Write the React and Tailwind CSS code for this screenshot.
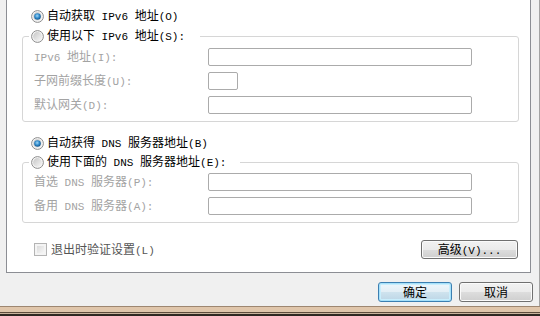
import React from "react";

const CJK = /([\u3000-\u9fff\uff00-\uffef]+)/;

// split text so Latin runs get a half-width mono face (like SimSun)
function T({ s }) {
  return s
    .split(CJK)
    .filter(Boolean)
    .map((p, i) =>
      CJK.test(p) ? (
        <span key={i}>{p}</span>
      ) : (
        <span key={i} className="font-['Liberation_Mono',monospace] text-[11px] whitespace-pre">
          {p}
        </span>
      )
    );
}

function Radio({ checked }) {
  return (
    <svg width="13" height="13" viewBox="0 0 13 13" className="shrink-0">
      <defs>
        <linearGradient id="rg" x1="0" y1="0" x2="1" y2="1">
          <stop offset="0" stopColor="#c6c6c6" />
          <stop offset="1" stopColor="#f7f7f7" />
        </linearGradient>
        <radialGradient id="rb" cx="0.45" cy="0.4" r="0.65">
          <stop offset="0" stopColor="#9fd8f8" />
          <stop offset="0.55" stopColor="#2c86c8" />
          <stop offset="1" stopColor="#0e4a7a" />
        </radialGradient>
      </defs>
      <circle cx="6.5" cy="6.5" r="5.9" fill="#f5f5f5" stroke="#8d8d8d" strokeWidth="1" />
      <circle cx="6.5" cy="6.5" r="4.4" fill="url(#rg)" />
      {checked && <circle cx="6.5" cy="6.5" r="3.3" fill="url(#rb)" />}
    </svg>
  );
}

function Field({ w = "w-[264px]" }) {
  return (
    <input
      disabled
      className={`h-[18px] ${w} border border-[#ababab] rounded-[2px] bg-white`}
    />
  );
}

function Row({ label, short }) {
  return (
    <div className="flex items-center h-[18px] text-[#a3a3a3]">
      <div className="w-[174px] leading-none">
        <T s={label} />
      </div>
      <Field w={short ? "w-[30px]" : "w-[264px]"} />
    </div>
  );
}

function Btn({ children, primary, w = "w-[74px]", h = "h-[20px]" }) {
  return (
    <button
      className={`${w} ${h} rounded-[3px] border text-[12px] leading-none text-black ${
        primary
          ? "border-[#3c7fb1] shadow-[inset_0_0_0_1px_#a6e1fb,inset_0_0_0_2px_#c9eefc] bg-[linear-gradient(#eef7fc,#e2eef5_50%,#cfe3ee_50%,#bcd6e6)]"
          : "border-[#707070] shadow-[inset_0_0_0_1px_#fbfbfb] bg-[linear-gradient(#f2f2f2,#ebebeb_50%,#dddddd_50%,#cfcfcf)]"
      }`}
    >
      {children}
    </button>
  );
}

export default function App() {
  return (
    <div className="w-[540px] h-[316px] overflow-hidden bg-[#f0f0f0] font-['Noto_Sans_CJK_SC',sans-serif] text-[12px] text-black">
      <div className="h-[306px] border-r border-[#a3a3a3] pl-[6px] flex flex-col">
        {/* tab page */}
        <div className="w-[525px] h-[273px] bg-white border-l border-r border-b border-[#8c8e94] pl-[15px]">
          <div className="flex items-center gap-[3px] h-[20px] mt-[6px] pl-[9px] leading-none">
            <Radio checked />
            <span>
              <T s="自动获取 IPv6 地址(O)" />
            </span>
          </div>

          <fieldset className="w-[497px] m-0 p-0 border border-[#d6d6d6] rounded-[3px]">
            <legend className="ml-[6px] p-0">
              <div className="w-[171px] h-[20px] flex items-center gap-[3px] pl-[2px] bg-white leading-none">
                <Radio />
                <span>
                  <T s="使用以下 IPv6 地址(S):" />
                </span>
              </div>
            </legend>
            <div className="pl-[11px] pt-[2px] pb-[7px] flex flex-col gap-[6px]">
              <Row label="IPv6 地址(I):" />
              <Row label="子网前缀长度(U):" short />
              <Row label="默认网关(D):" />
            </div>
          </fieldset>

          <div className="flex items-center gap-[3px] h-[18px] mt-[12px] pl-[9px] leading-none">
            <Radio checked />
            <span>
              <T s="自动获得 DNS 服务器地址(B)" />
            </span>
          </div>

          <fieldset className="w-[497px] m-0 p-0 border border-[#d6d6d6] rounded-[3px]">
            <legend className="ml-[6px] p-0">
              <div className="w-[211px] h-[20px] flex items-center gap-[3px] pl-[2px] bg-white leading-none">
                <Radio />
                <span>
                  <T s="使用下面的 DNS 服务器地址(E):" />
                </span>
              </div>
            </legend>
            <div className="pl-[11px] pt-[1px] pb-[7px] flex flex-col gap-[6px]">
              <Row label="首选 DNS 服务器(P):" />
              <Row label="备用 DNS 服务器(A):" />
            </div>
          </fieldset>

          <div className="w-[497px] h-[19px] mt-[17px] pl-[12px] pr-[1px] flex items-center justify-between">
            <div className="flex items-center gap-[4px] leading-none text-[#555]">
              <div className="w-[13px] h-[13px] border border-[#b4b4b4] bg-[#f4f4f4] p-[2px]">
                <div className="w-full h-full bg-[linear-gradient(135deg,#dcdcdc,#f6f6f6)]" />
              </div>
              <span>
                <T s="退出时验证设置(L)" />
              </span>
            </div>
            <Btn w="w-[97px]" h="h-[19px]">
              <T s="高级(V)..." />
            </Btn>
          </div>
        </div>

        {/* dialog buttons */}
        <div className="flex justify-end gap-[7px] pr-[2px] mt-[9px] w-[529px]">
          <Btn primary>确定</Btn>
          <Btn>取消</Btn>
        </div>
      </div>

      {/* window frame bottom */}
      <div className="h-[10px] flex flex-col">
        <div className="h-[1px] bg-[#9e8771]" />
        <div className="h-[5px] bg-[#e0c6ab]" />
        <div className="h-[1px] bg-[#5e4c3c]" />
        <div className="h-[1px] bg-[#c9b39c]" />
        <div className="h-[2px] bg-[#2f2822]" />
      </div>
    </div>
  );
}
